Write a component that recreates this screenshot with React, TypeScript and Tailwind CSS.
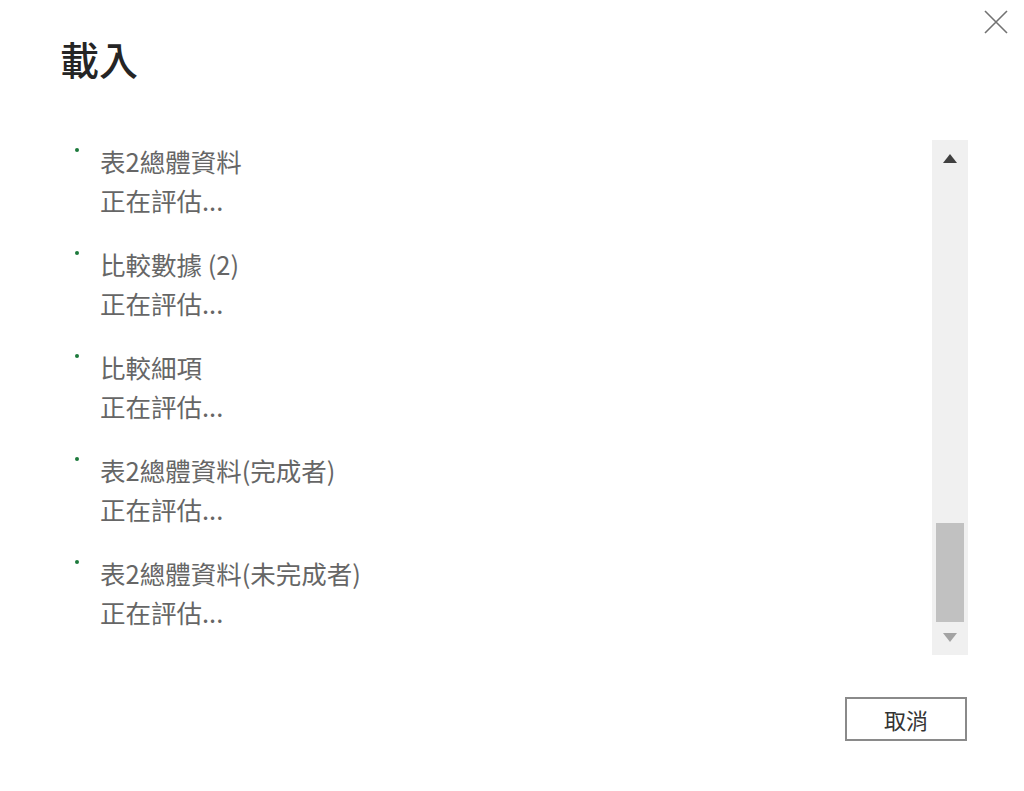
const items = [
  '表2總體資料',
  '比較數據 (2)',
  '比較細項',
  '表2總體資料(完成者)',
  '表2總體資料(未完成者)',
]

const font = { fontFamily: '"Noto Sans CJK TC", "Noto Sans", sans-serif' }

export default function App() {
  return (
    <div
      className="relative h-[791px] w-[1024px] overflow-hidden bg-white"
      style={font}
    >
      {/* close */}
      <button className="absolute left-[984px] top-[10px] text-[#727272]">
        <svg width="24" height="24" viewBox="0 0 24 24" fill="none" stroke="currentColor" strokeWidth="1.6">
          <path d="M1 1 L23 23 M23 1 L1 23" />
        </svg>
      </button>

      <div className="flex h-full flex-col pl-[60px] pr-[56px] pt-[39px]">
        <h1 className="text-[39px] font-medium leading-none text-[#252525]">載入</h1>

        {/* list + scrollbar */}
        <div className="mt-[62px] flex h-[515px]">
          <ul className="flex flex-1 flex-col gap-[34px] pl-[15px] pt-[6px]">
            {items.map((name) => (
              <li key={name} className="flex">
                <div className="mt-[2px] h-[4px] w-[4px] rounded-full bg-[#1d7a3c]" />
                <div className="ml-[21px] flex flex-col text-[25.5px] text-[#666]">
                  <span className="leading-[30px]">{name}</span>
                  <span className="mt-[9px] leading-[30px]">正在評估...</span>
                </div>
              </li>
            ))}
          </ul>

          <div className="flex w-[36px] flex-col bg-[#f0f0f0]">
            <div className="flex h-[36px] items-center justify-center">
              <div className="h-0 w-0 border-x-[7px] border-b-[9px] border-x-transparent border-b-[#404040]" />
            </div>
            <div className="flex flex-1 flex-col justify-end px-[4px] pb-[2px]">
              <div className="h-[99px] bg-[#c1c1c1]" />
            </div>
            <div className="flex h-[31px] items-start justify-center pt-[9px]">
              <div className="h-0 w-0 border-x-[7px] border-t-[9px] border-x-transparent border-t-[#a3a3a3]" />
            </div>
          </div>
        </div>

        <div className="mt-[42px] flex justify-end pr-[1px]">
          <button className="flex h-[44px] w-[122px] items-center justify-center border-2 border-[#8a8a8a] text-[22px] text-[#333]">
            取消
          </button>
        </div>
      </div>
    </div>
  )
}
